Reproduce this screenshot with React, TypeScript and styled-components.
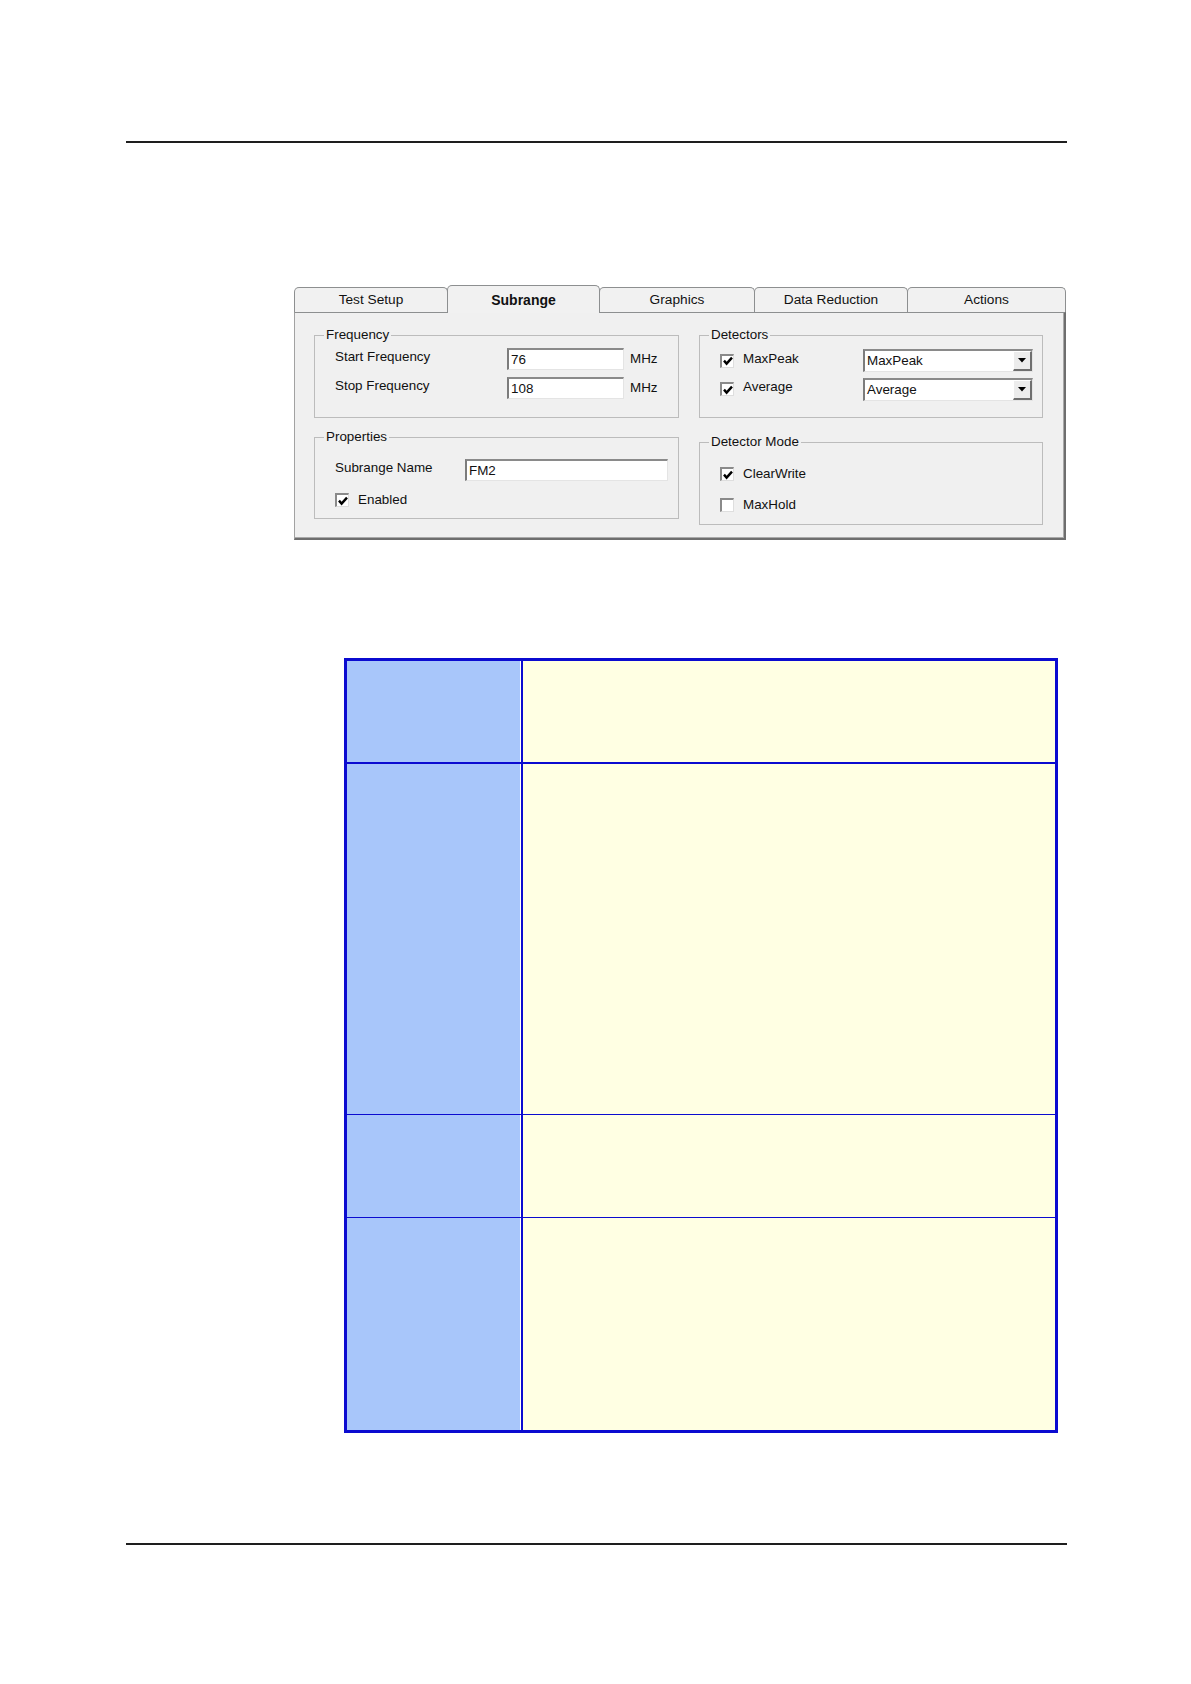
import React from "react";
import styled, { createGlobalStyle } from "styled-components";

const Global = createGlobalStyle`
  html, body { margin: 0; padding: 0; background: #ffffff; }
  body { font-family: "Liberation Sans", Arial, sans-serif; color: #000; }
`;

const Page = styled.div`
  width: 1191px;
  min-height: 1684px;
  box-sizing: border-box;
  padding-top: 141px;
  display: flex;
  flex-direction: column;
`;

const Rule = styled.div<{ $top: number }>`
  margin: ${(p) => p.$top}px 0 0 126px;
  width: 941px;
  height: 2px;
  background: #1e1e1e;
`;

/* ---------- dialog ---------- */

const Dialog = styled.div`
  margin: 142px 0 0 294px;
  width: 772px;
  display: flex;
  flex-direction: column;
  font-size: 13.4px;
`;

const TabStrip = styled.div`
  display: flex;
  align-items: flex-end;
  height: 28px;
  margin-bottom: -1px;
  position: relative;
  z-index: 1;
`;

const Tab = styled.div<{ $w: number; $active?: boolean }>`
  flex: 0 0 ${(p) => p.$w}px;
  box-sizing: border-box;
  height: ${(p) => (p.$active ? 28 : 25)}px;
  margin-bottom: ${(p) => (p.$active ? 0 : 1)}px;
  margin-right: -1px;
  border: 1px solid #8d8f90;
  border-bottom: none;
  border-radius: 5px 5px 0 0;
  background: #f1f1f1;
  text-align: center;
  font-size: ${(p) => (p.$active ? 14 : 13.7)}px;
  font-weight: ${(p) => (p.$active ? 700 : 400)};
  line-height: ${(p) => (p.$active ? 26 : 24)}px;
  padding-top: ${(p) => (p.$active ? 1 : 0)}px;
  color: #111;
  position: relative;
  z-index: ${(p) => (p.$active ? 2 : 1)};
`;

const Panel = styled.div`
  height: 228px;
  box-sizing: border-box;
  background: #f0f0f0;
  border-top: 1px solid #8d8f90;
  border-left: 1px solid #a2a2a2;
  border-right: 2px solid #6e6e6e;
  border-bottom: 2px solid #6e6e6e;
  box-shadow: inset -1px -1px 0 #a9a9a9;
  padding: 14px 0 0 19px;
  display: grid;
  grid-template-columns: 365px 344px;
  column-gap: 20px;
  align-items: start;
`;

const Column = styled.div<{ $gap: number }>`
  display: flex;
  flex-direction: column;
  gap: ${(p) => p.$gap}px;
`;

const Group = styled.fieldset<{ $h: number }>`
  margin: 0;
  min-width: 0;
  box-sizing: border-box;
  height: ${(p) => p.$h}px;
  border: 1px solid #bcbcbc;
  padding: 0;
`;

const Legend = styled.legend`
  margin-left: 9px;
  padding: 0 2px;
  font-size: 13.4px;
  line-height: 16px;
  color: #111;
`;

const GroupBody = styled.div<{ $pt: number; $pl: number }>`
  display: flex;
  flex-direction: column;
  padding: ${(p) => p.$pt}px 0 0 ${(p) => p.$pl}px;
`;

const FieldRow = styled.div<{ $cols: string; $h: number; $mt?: number }>`
  display: grid;
  grid-template-columns: ${(p) => p.$cols};
  align-items: center;
  height: ${(p) => p.$h}px;
  margin-top: ${(p) => p.$mt ?? 0}px;
`;

const Label = styled.span<{ $lift?: number }>`
  line-height: 16px;
  color: #111;
  white-space: nowrap;
  margin-bottom: ${(p) => (p.$lift ?? 0) * 2}px;
`;

const Unit = styled.span`
  line-height: 16px;
  margin-left: 6px;
  color: #111;
`;

const TextBox = styled.div<{ $w: number }>`
  width: ${(p) => p.$w}px;
  height: 22px;
  box-sizing: border-box;
  background: #fff;
  border-style: solid;
  border-width: 2px 1px 1px 2px;
  border-color: #8a8a8a #e4e4e4 #e4e4e4 #7c7c7c;
  padding-left: 2px;
  line-height: 19px;
  font-size: 13.4px;
  color: #111;
`;

const Combo = styled.div`
  width: 170px;
  height: 23px;
  box-sizing: border-box;
  background: #fff;
  border-style: solid;
  border-width: 2px 1px 1px 2px;
  border-color: #8a8a8a #e4e4e4 #e4e4e4 #7c7c7c;
  display: flex;
  align-items: stretch;
  justify-content: space-between;
`;

const ComboText = styled.span`
  padding-left: 2px;
  line-height: 20px;
  font-size: 13.4px;
  color: #111;
`;

const DropButton = styled.span`
  width: 19px;
  box-sizing: border-box;
  background: #ececec;
  border-style: solid;
  border-width: 1px 2px 2px 1px;
  border-color: #ffffff #6f6f6f #6f6f6f #ffffff;
  display: flex;
  align-items: center;
  justify-content: center;
`;

const CheckRow = styled.div<{ $h: number; $mt?: number }>`
  display: flex;
  align-items: center;
  gap: 9px;
  height: ${(p) => p.$h}px;
  margin-top: ${(p) => p.$mt ?? 0}px;
`;

const Box = styled.span`
  width: 14px;
  height: 14px;
  box-sizing: border-box;
  background: #fff;
  border-style: solid;
  border-width: 2px 1px 1px 2px;
  border-color: #8a8a8a #dedede #dedede #8a8a8a;
  display: inline-flex;
  align-items: center;
  justify-content: center;
  flex: 0 0 auto;
`;

const Check: React.FC<{ on?: boolean; label: string; lift?: number }> = ({ on, label, lift }) => (
  <>
    <Box>
      {on && (
        <svg width="10" height="10" viewBox="0 0 10 10">
          <path d="M1 4.6 L3.6 7.6 L9 1.6" fill="none" stroke="#000" strokeWidth="2.4" />
        </svg>
      )}
    </Box>
    <Label $lift={lift}>{label}</Label>
  </>
);

const Arrow = () => (
  <svg width="8" height="5" viewBox="0 0 8 5">
    <path d="M0 0 H8 L4 4.5 Z" fill="#000" />
  </svg>
);

/* ---------- table ---------- */

const TABLE_BLUE = "#0b0bd0";

const Table = styled.div`
  margin: 118px 0 0 344px;
  width: 714px;
  box-sizing: border-box;
  border: 3px solid ${TABLE_BLUE};
  display: flex;
  flex-direction: column;
`;

const Row = styled.div<{ $h: number; $line: number }>`
  display: flex;
  height: ${(p) => p.$h}px;
  border-top: ${(p) => p.$line}px solid ${TABLE_BLUE};
`;

const KeyCell = styled.div`
  width: 173px;
  background: #a8c6fa;
  border-right: 1px solid #ffffff;
`;

const ValueCell = styled.div`
  flex: 1;
  background: #ffffe3;
  border-left: 2px solid ${TABLE_BLUE};
`;

const rows = [
  { h: 101, line: 0 },
  { h: 350, line: 2 },
  { h: 102, line: 1 },
  { h: 212, line: 1 },
];

const tabs = [
  { label: "Test Setup", w: 154 },
  { label: "Subrange", w: 153, active: true },
  { label: "Graphics", w: 156 },
  { label: "Data Reduction", w: 154 },
  { label: "Actions", w: 159 },
];

export default function App() {
  return (
    <Page>
      <Global />
      <Rule $top={0} />

      <Dialog>
        <TabStrip>
          {tabs.map((t) => (
            <Tab key={t.label} $w={t.w} $active={t.active}>
              {t.label}
            </Tab>
          ))}
        </TabStrip>
        <Panel>
          <Column $gap={11}>
            <Group $h={91}>
              <Legend>Frequency</Legend>
              <GroupBody $pt={5} $pl={20}>
                <FieldRow $cols="172px 117px auto" $h={22}>
                  <Label $lift={2}>Start Frequency</Label>
                  <TextBox $w={117}>76</TextBox>
                  <Unit>MHz</Unit>
                </FieldRow>
                <FieldRow $cols="172px 117px auto" $h={22} $mt={7}>
                  <Label $lift={2}>Stop Frequency</Label>
                  <TextBox $w={117}>108</TextBox>
                  <Unit>MHz</Unit>
                </FieldRow>
              </GroupBody>
            </Group>
            <Group $h={90}>
              <Legend>Properties</Legend>
              <GroupBody $pt={14} $pl={20}>
                <FieldRow $cols="130px 203px" $h={22}>
                  <Label $lift={2}>Subrange Name</Label>
                  <TextBox $w={203}>FM2</TextBox>
                </FieldRow>
                <CheckRow $h={16} $mt={11}>
                  <Check on label="Enabled" />
                </CheckRow>
              </GroupBody>
            </Group>
          </Column>

          <Column $gap={16}>
            <Group $h={91}>
              <Legend>Detectors</Legend>
              <GroupBody $pt={6} $pl={20}>
                <FieldRow $cols="143px 170px" $h={23}>
                  <CheckRow $h={23}>
                    <Check on label="MaxPeak" lift={2} />
                  </CheckRow>
                  <Combo>
                    <ComboText>MaxPeak</ComboText>
                    <DropButton>
                      <Arrow />
                    </DropButton>
                  </Combo>
                </FieldRow>
                <FieldRow $cols="143px 170px" $h={24} $mt={5}>
                  <CheckRow $h={24}>
                    <Check on label="Average" lift={2} />
                  </CheckRow>
                  <Combo>
                    <ComboText>Average</ComboText>
                    <DropButton>
                      <Arrow />
                    </DropButton>
                  </Combo>
                </FieldRow>
              </GroupBody>
            </Group>
            <Group $h={91}>
              <Legend>Detector Mode</Legend>
              <GroupBody $pt={16} $pl={20}>
                <CheckRow $h={16}>
                  <Check on label="ClearWrite" />
                </CheckRow>
                <CheckRow $h={16} $mt={15}>
                  <Check label="MaxHold" />
                </CheckRow>
              </GroupBody>
            </Group>
          </Column>
        </Panel>
      </Dialog>

      <Table>
        {rows.map((r, i) => (
          <Row key={i} $h={r.h} $line={r.line}>
            <KeyCell />
            <ValueCell />
          </Row>
        ))}
      </Table>

      <Rule $top={110} />
    </Page>
  );
}
